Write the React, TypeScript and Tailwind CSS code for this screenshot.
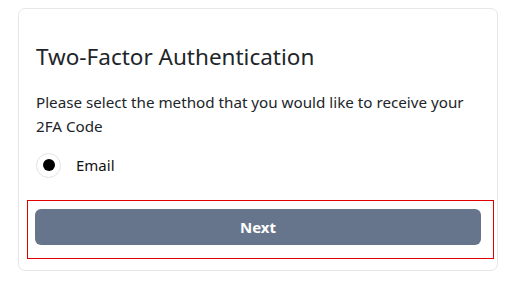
export default function App() {
  return (
    <div className="w-[506px] h-[287px] bg-white pt-[8px] pl-[18px]" style={{ fontFamily: '"Noto Sans", sans-serif' }}>
      <div className="w-[480px] h-[263px] rounded-[7px] border border-[#e5e7eb] pt-[32px] px-[8px]">
        <h2 className="px-[9px] text-[22.5px] leading-[32px] text-[#212529]">Two-Factor Authentication</h2>
        <p className="mt-[17px] px-[9px] text-[15.2px] leading-[24px] text-[#212529]">
          Please select the method that you would like to receive your 2FA Code
        </p>
        <label className="mt-[14px] px-[9px] flex items-center gap-[15px] h-[26px]">
          <span className="w-[25px] h-[25px] rounded-full border border-[#e2e2e2] flex items-center justify-center">
            <span className="w-[12px] h-[12px] rounded-full bg-black" />
          </span>
          <span className="text-[15px] text-[#111]">Email</span>
        </label>
        <div className="mt-[22px] border border-[#e00000] w-[467px] h-[59px] pt-[8px] pl-[7px]">
          <button className="w-[446px] h-[36px] rounded-[6px] bg-[#66758b] text-white font-bold text-[15px]">
            Next
          </button>
        </div>
      </div>
    </div>
  );
}
